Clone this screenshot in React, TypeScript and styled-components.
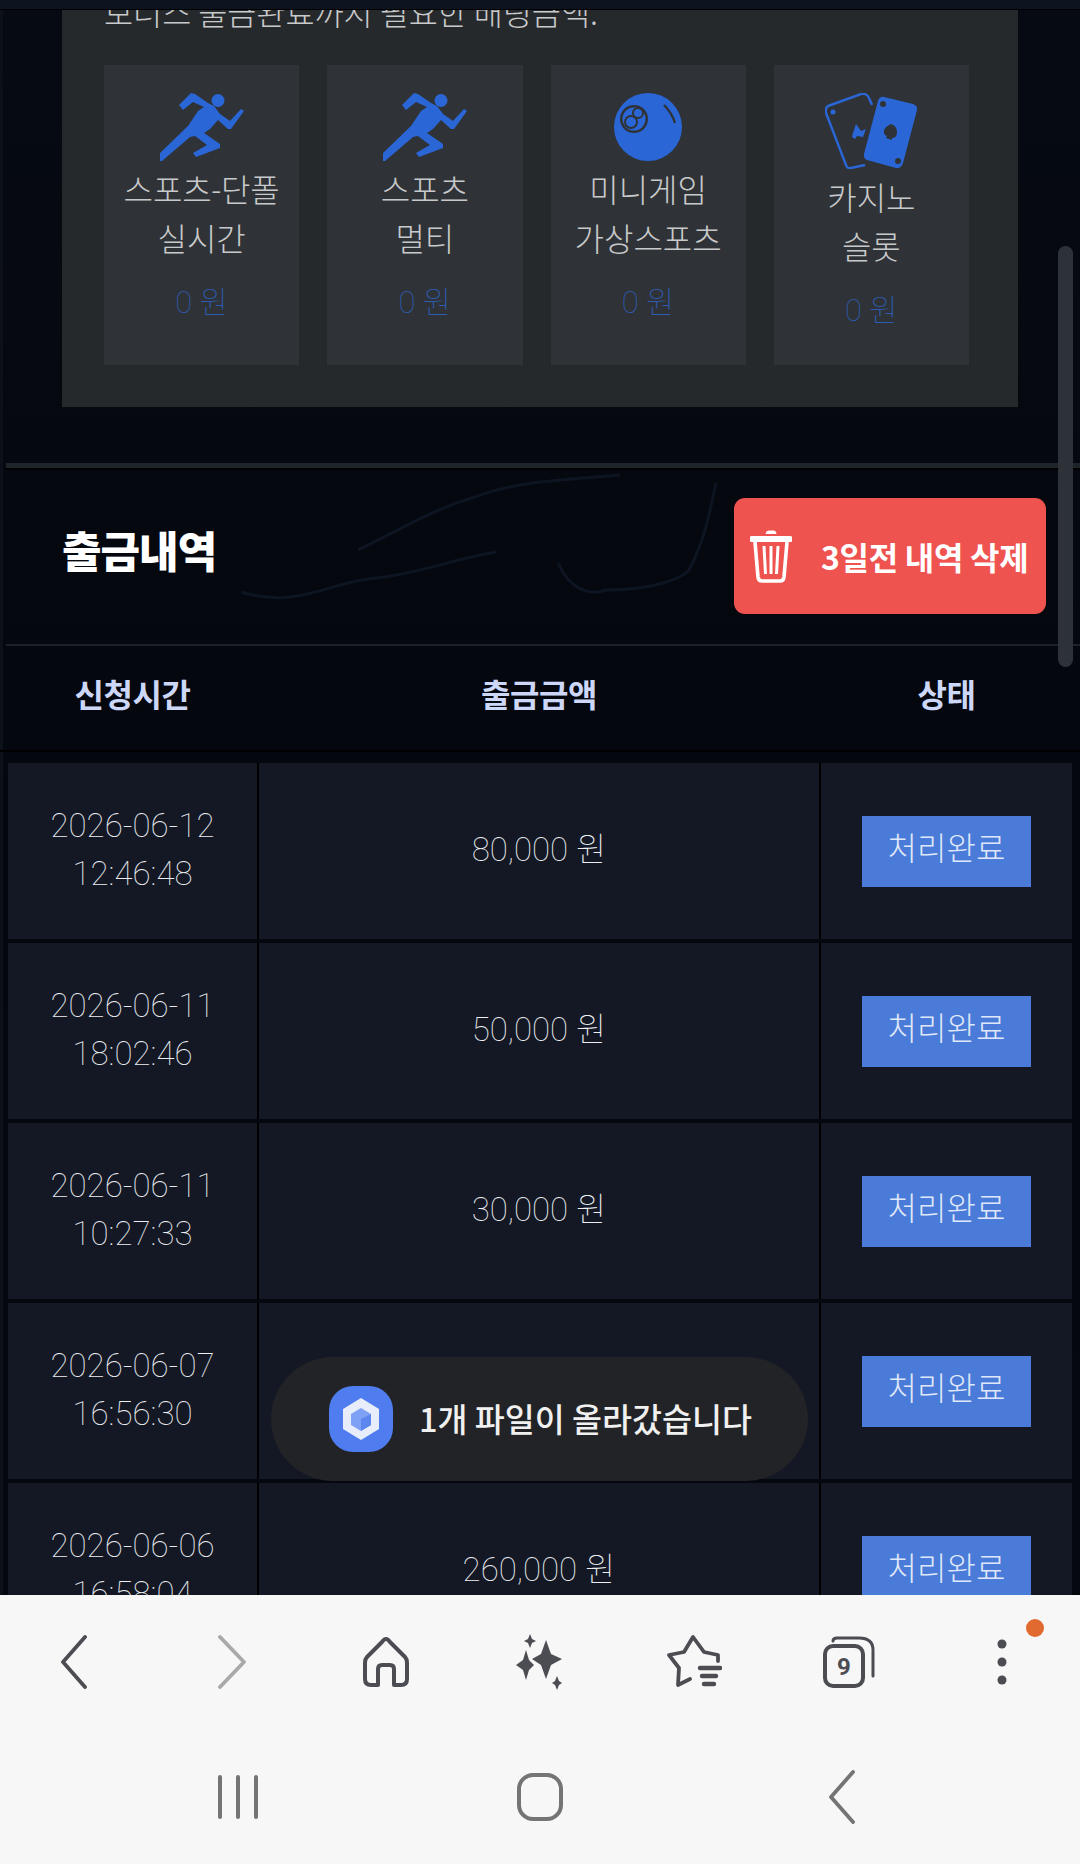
import React from 'react';
import styled, { createGlobalStyle } from 'styled-components';

const GlobalStyle = createGlobalStyle`
    html, body {
        margin: 0;
        padding: 0;
        background: #05080e;
    }
    * {
        box-sizing: border-box;
    }
`;

const FONT = `"Noto Sans CJK KR", "Noto Sans", sans-serif`;
const THIN = `Roboto, "Noto Sans CJK KR", sans-serif`;

const bonusCards = [
    { icon: 'run', lines: ['스포츠-단폴', '실시간'] },
    { icon: 'run', lines: ['스포츠', '멀티'] },
    { icon: 'ball', lines: ['미니게임', '가상스포츠'] },
    { icon: 'cards', lines: ['카지노', '슬롯'] },
];

const withdrawals = [
    { date: '2026-06-12', time: '12:46:48', amount: '80,000 원' },
    { date: '2026-06-11', time: '18:02:46', amount: '50,000 원' },
    { date: '2026-06-11', time: '10:27:33', amount: '30,000 원' },
    { date: '2026-06-07', time: '16:56:30', amount: '' },
    { date: '2026-06-06', time: '16:58:04', amount: '260,000 원' },
];

const RunnerIcon = () => (
    <svg width="84" height="68" viewBox="0 0 84 68" fill="#2a66d6">
        <circle cx="58" cy="7.5" r="6.5" />
        <path d="M19 12 L31 0 L35 1 L48 10 L54 13 L60 21 L70 28 L81 16 L84 18 L71 36 L68 36 L58 27 L50 36 L44 40 L60 51 L60 55 L36 64 L33 60 L47 52 L35 43 L30 44 L2 68 L0 68 L0 60 L28 33 L38 18 L44 14 L33 9 L23 17 Z" />
    </svg>
);

const BallIcon = () => (
    <svg width="68" height="68" viewBox="0 0 68 68">
        <circle cx="34" cy="34" r="34" fill="#2a66d6" />
        <circle cx="20" cy="26" r="14" fill="#2f3337" />
        <circle cx="20" cy="26" r="11.5" fill="#2a66d6" />
        <circle cx="24" cy="20" r="5" fill="none" stroke="#2f3337" strokeWidth="2" />
        <circle cx="17" cy="29" r="6" fill="none" stroke="#2f3337" strokeWidth="2" />
        <path d="M50 12 Q58 20 61 30" fill="none" stroke="#2f3337" strokeWidth="2.4" />
    </svg>
);

const CardsIcon = () => (
    <svg width="93" height="76" viewBox="0 0 93 76">
        <path d="M3 13 L36 1 Q42 0 44 5 L47 12 M40 72 L26 75 Q22 76 21 72 L1 20 Q0 15 3 13" fill="none" stroke="#2a66d6" strokeWidth="2.4" strokeLinejoin="round" />
        <circle cx="8" cy="19" r="2.5" fill="#2a66d6" />
        <path d="M31 31 L36 38 L41 36 L38 44 L32 43 L30 46 L27 44 L28 40 Z" fill="#2a66d6" />
        <path d="M59 4 L88 11 Q93 13 92 17 L78 70 Q76 76 71 75 L42 67 Q38 65 39 61 L53 8 Q55 3 59 4 Z" fill="#2a66d6" />
        <circle cx="58" cy="11" r="3" fill="#2f3337" />
        <circle cx="73" cy="68" r="3" fill="#2f3337" />
        <path d="M66 31 Q72 33 72 39 Q72 45 67 45 L67 47 L61 45 L62 43 Q58 42 59 37 Q61 33 66 31 Z" fill="#2f3337" />
    </svg>
);

const TrashIcon = () => (
    <svg width="42" height="53" viewBox="0 0 42 53" fill="none" stroke="#fff">
        <path d="M16 4 Q16 1 19 1 L24 1 Q26 1 26 4" fill="#fff" strokeWidth="1" />
        <path d="M2 9 L40 9" strokeWidth="6" strokeLinecap="round" />
        <path d="M5 12 L8 47 Q8.5 51 12 51 L30 51 Q33.5 51 34 47 L37 12" strokeWidth="3.6" />
        <path d="M14 16 L15.5 44 M21 16 L21 44 M28 16 L26.5 44" strokeWidth="3" />
    </svg>
);

const FileIcon = () => (
    <svg width="64" height="66" viewBox="0 0 64 66">
        <rect width="64" height="66" rx="24" fill="#4f7df0" />
        <path d="M32 12 L50 23 L50 43 L32 54 L14 43 L14 23 Z" fill="#e8edfb" />
        <path d="M32 22 L42 28 L42 39 L32 45 L22 39 L22 28 Z" fill="#7fa1f5" />
        <path d="M32 33 L42 28 L42 39 L32 45 Z" fill="#5d86ee" />
    </svg>
);

const BackArrow = ({ color = '#4c4d52' }: { color?: string }) => (
    <svg width="26" height="54" viewBox="0 0 26 54" fill="none" stroke={color} strokeWidth="3.8" strokeLinecap="round" strokeLinejoin="round">
        <path d="M24 2 L2 27 L24 52" />
    </svg>
);

const ForwardArrow = () => (
    <svg width="28" height="54" viewBox="0 0 28 54" fill="none" stroke="#a9a9ab" strokeWidth="3.8" strokeLinecap="round" strokeLinejoin="round">
        <path d="M2 2 L26 27 L2 52" />
    </svg>
);

const HomeIcon = () => (
    <svg width="46" height="50" viewBox="0 0 46 50" fill="none" stroke="#4c4d52" strokeWidth="4" strokeLinejoin="round">
        <path d="M23 2 Q21 2 19 5 L4 20 Q2 22 2 26 L2 42 Q2 48 8 48 L15 48 L15 32 Q15 28 19 28 L27 28 Q31 28 31 32 L31 48 L38 48 Q44 48 44 42 L44 26 Q44 22 42 20 L27 5 Q25 2 23 2 Z" />
    </svg>
);

const SparkleIcon = () => (
    <svg width="48" height="56" viewBox="0 0 48 56" fill="#4c4d52">
        <path d="M30 6 L35 20 L46 25 L35 31 L30 45 L25 31 L16 25 L25 20 Z" />
        <path d="M10 16 L13 26 L18 31 L13 36 L10 46 L7 36 L0 31 L7 26 Z" />
        <path d="M14 0 L16 5 L20 7 L16 9 L14 14 L12 9 L8 7 L12 5 Z" />
        <path d="M41 42 L43 47 L46 49 L43 51 L41 56 L39 51 L36 49 L39 47 Z" />
    </svg>
);

const StarIcon = () => (
    <svg width="56" height="54" viewBox="0 0 56 54" fill="none" stroke="#4c4d52" strokeWidth="3.8" strokeLinecap="round" strokeLinejoin="round">
        <path d="M52 26 L52 20 L38 17 L27 2 L18 17 L3 20 L13 33 L12 50 L24 44" />
        <path d="M34 33 L54 33 M36 41 L50 41 M38 49 L48 49" strokeWidth="4.4" />
    </svg>
);

const TabsIcon = () => (
    <svg width="52" height="52" viewBox="0 0 52 52" fill="none" stroke="#4c4d52" strokeLinecap="round">
        <rect x="2" y="10" width="38" height="40" rx="8" strokeWidth="4" />
        <path d="M10 5 Q10 2 14 2 L36 2 Q50 2 50 14 L50 40" strokeWidth="3" />
        <text x="21" y="39" textAnchor="middle" fontSize="24" fontWeight="700" fontFamily="Roboto, sans-serif" fill="#4c4d52" stroke="none">9</text>
    </svg>
);

const MoreIcon = () => (
    <svg width="10" height="46" viewBox="0 0 10 46" fill="#4c4d52">
        <circle cx="5" cy="5" r="4.5" />
        <circle cx="5" cy="23" r="4.5" />
        <circle cx="5" cy="41" r="4.5" />
    </svg>
);

const SmokeLines = () => (
    <Smoke viewBox="0 0 1080 760" fill="none" stroke="#0e1522" strokeWidth="3">
        <path d="M241 592 C300 610 330 580 385 577 C430 570 450 560 496 552" />
        <path d="M358 550 C400 530 430 510 475 497 C520 480 570 480 620 475" />
        <path d="M558 563 C570 590 590 596 606 590 C650 590 680 580 689 570 C705 540 710 510 716 483" />
    </Smoke>
);

const App: React.FC = () => {
    const renderIcon = (icon: string) => {
        if (icon === 'run') return <RunnerIcon />;
        if (icon === 'ball') return <BallIcon />;
        return <CardsIcon />;
    };

    return (
        <Page>
            <GlobalStyle />
            <SmokeLines />
            <TopEdge />
            <Viewport>
                <BonusArea>
                    <BonusPanel>
                        <BonusNote>보너스 출금완료까지 필요한 배팅금액.</BonusNote>
                        <CardGrid>
                            {bonusCards.map((card, index) => (
                                <BonusCard key={index}>
                                    <IconSlot>{renderIcon(card.icon)}</IconSlot>
                                    <CardLabel>{card.lines[0]}</CardLabel>
                                    <CardLabel>{card.lines[1]}</CardLabel>
                                    <CardAmount>0 원</CardAmount>
                                </BonusCard>
                            ))}
                        </CardGrid>
                    </BonusPanel>
                </BonusArea>
                <Divider />
                <SectionHeader>
                    <SectionTitle>출금내역</SectionTitle>
                    <DeleteButton>
                        <TrashIcon />
                        3일전 내역 삭제
                    </DeleteButton>
                </SectionHeader>
                <TableHead>
                    <HeadCell>신청시간</HeadCell>
                    <HeadCell>출금금액</HeadCell>
                    <HeadCell>상태</HeadCell>
                </TableHead>
                <TableBody>
                    {withdrawals.map((row, index) => (
                        <TableRow key={index}>
                            <BodyCell>
                                <span>{row.date}</span>
                                <span>{row.time}</span>
                            </BodyCell>
                            <BodyCell>{row.amount}</BodyCell>
                            <BodyCell>
                                <StatusBadge>처리완료</StatusBadge>
                            </BodyCell>
                        </TableRow>
                    ))}
                </TableBody>
            </Viewport>
            <BrowserBar>
                <ToolButton $nudge={-6}><BackArrow /></ToolButton>
                <ToolButton $nudge={2}><ForwardArrow /></ToolButton>
                <ToolButton><HomeIcon /></ToolButton>
                <ToolButton><SparkleIcon /></ToolButton>
                <ToolButton><StarIcon /></ToolButton>
                <ToolButton><TabsIcon /></ToolButton>
                <ToolButton $nudge={-2}>
                    <MoreIcon />
                    <NoticeDot />
                </ToolButton>
            </BrowserBar>
            <SystemNav>
                <NavButton>
                    <svg width="42" height="44" viewBox="0 0 42 44" stroke="#747476" strokeWidth="4" strokeLinecap="round">
                        <path d="M3 2 L3 42 M21 2 L21 42 M39 2 L39 42" />
                    </svg>
                </NavButton>
                <NavButton>
                    <svg width="46" height="48" viewBox="0 0 46 48" fill="none" stroke="#747476" strokeWidth="4">
                        <rect x="2" y="2" width="42" height="44" rx="14" />
                    </svg>
                </NavButton>
                <NavButton>
                    <BackArrow color="#747476" />
                </NavButton>
            </SystemNav>
            <ScrollThumb />
            <Toast>
                <FileIcon />
                <ToastText>1개 파일이 올라갔습니다</ToastText>
            </Toast>
        </Page>
    );
};

const Page = styled.div`
    position: relative;
    width: 1080px;
    height: 1864px;
    overflow: hidden;
    display: flex;
    flex-direction: column;
    background:
        linear-gradient(90deg, #0b1019 3px, transparent 3px),
        linear-gradient(180deg, #060a12 0%, #04070d 45%, #05080f 100%);
    font-family: ${FONT};
`;

const Smoke = styled.svg`
    position: absolute;
    left: 0;
    top: 0;
    width: 1080px;
    height: 760px;
`;

const TopEdge = styled.div`
    position: relative;
    flex: none;
    height: 10px;
    background: #0d1420;
    border-bottom: 1px solid #000;
`;

const Viewport = styled.div`
    position: relative;
    flex: none;
    height: 1585px;
    overflow: hidden;
`;

const BonusArea = styled.div`
    height: 453px;
    padding: 0 62px;
`;

const BonusPanel = styled.div`
    height: 397px;
    padding: 0 49px 0 42px;
    overflow: hidden;
    background: #26292c;
`;

const BonusNote = styled.div`
    height: 40px;
    margin-top: -19px;
    margin-bottom: 34px;
    font-family: ${FONT};
    font-size: 31.6px;
    font-weight: 300;
    line-height: 40px;
    color: #c9cacb;
    white-space: nowrap;
`;

const CardGrid = styled.div`
    display: grid;
    grid-template-columns: repeat(4, 1fr);
    column-gap: 28px;
`;

const BonusCard = styled.div`
    height: 300px;
    padding-top: 28px;
    background: #2f3337;
    text-align: center;
`;

const IconSlot = styled.div`
    display: flex;
    justify-content: center;
    margin-bottom: 6px;
    svg {
        display: block;
    }
`;

const CardLabel = styled.div`
    font-family: ${THIN};
    font-size: 32px;
    font-weight: 300;
    line-height: 49px;
    color: #c8c9ca;
`;

const CardAmount = styled.div`
    margin-top: 14px;
    font-family: ${THIN};
    font-size: 31px;
    font-weight: 100;
    line-height: 48px;
    color: #2d5cb4;
`;

const Divider = styled.div`
    height: 7px;
    margin-left: 6px;
    background: #1e2429;
    border-bottom: 2px solid #000;
`;

const SectionHeader = styled.div`
    height: 176px;
    margin-left: 6px;
    padding: 0 34px 0 56px;
    display: flex;
    align-items: center;
    justify-content: space-between;
    position: relative;
    border-bottom: 2px solid #1b2029;
`;

const SectionTitle = styled.h2`
    margin: -16px 0 0;
    font-size: 43px;
    font-weight: 900;
    color: #fff;
    letter-spacing: -1px;
`;

const DeleteButton = styled.button`
    width: 312px;
    height: 116px;
    margin-top: -2px;
    padding: 0 0 0 16px;
    display: flex;
    align-items: center;
    gap: 29px;
    border: 0;
    border-radius: 11px;
    background: #ef5350;
    font-family: ${FONT};
    font-size: 32px;
    font-weight: 700;
    letter-spacing: -0.3px;
    color: #fff;
    white-space: nowrap;
`;

const TableHead = styled.div`
    height: 106px;
    display: grid;
    grid-template-columns: 249px 560px 251px;
    column-gap: 2px;
    align-items: center;
    padding-left: 8px;
    border-bottom: 2px solid #000;
    position: relative;
`;

const HeadCell = styled.div`
    margin-top: -10px;
    text-align: center;
    font-size: 32px;
    font-weight: 700;
    color: #cdd8f8;
    letter-spacing: -0.5px;
`;

const TableBody = styled.div`
    position: relative;
    padding: 11px 8px 0;
    display: flex;
    flex-direction: column;
    gap: 4px;
`;

const TableRow = styled.div`
    flex: none;
    height: 176px;
    display: grid;
    grid-template-columns: 249px 560px 251px;
    column-gap: 2px;
    background: #000;
`;

const BodyCell = styled.div`
    display: flex;
    flex-direction: column;
    align-items: center;
    justify-content: center;
    padding-bottom: 3px;
    background: #131824;
    font-family: ${THIN};
    font-size: 33px;
    font-weight: 100;
    line-height: 48px;
    color: #eceef2;
`;

const StatusBadge = styled.div`
    width: 169px;
    height: 71px;
    margin-top: 3px;
    display: flex;
    align-items: center;
    justify-content: center;
    padding-bottom: 4px;
    background: #4a7bd8;
    font-size: 32px;
    font-weight: 300;
    color: #dfe7f8;
`;

const BrowserBar = styled.div`
    position: relative;
    flex: none;
    height: 134px;
    width: 1080px;
    display: grid;
    grid-template-columns: repeat(7, 1fr);
    background: #f7f7f7;
`;

const ToolButton = styled.div<{ $nudge?: number }>`
    position: relative;
    display: flex;
    align-items: center;
    justify-content: center;
    padding-left: ${(p) => Math.max(p.$nudge || 0, 0)}px;
    padding-right: ${(p) => Math.max(-(p.$nudge || 0), 0)}px;
`;

const NoticeDot = styled.span`
    position: absolute;
    left: 100px;
    top: 24px;
    width: 18px;
    height: 18px;
    border-radius: 50%;
    background: #e06a30;
`;

const SystemNav = styled.div`
    position: relative;
    flex: none;
    height: 135px;
    width: 1080px;
    display: grid;
    grid-template-columns: repeat(3, 302px);
    justify-content: center;
    background: #f7f7f7;
`;

const NavButton = styled.div`
    display: flex;
    align-items: center;
    justify-content: center;
    svg {
        display: block;
    }
`;

const ScrollThumb = styled.div`
    position: absolute;
    left: 1058px;
    top: 246px;
    width: 15px;
    height: 421px;
    border-radius: 8px;
    background: #2d3138;
`;

const Toast = styled.div`
    position: absolute;
    left: 271px;
    top: 1357px;
    width: 537px;
    height: 124px;
    padding-left: 58px;
    display: flex;
    align-items: center;
    gap: 26px;
    border-radius: 62px;
    background: #222326;
`;

const ToastText = styled.div`
    font-family: ${FONT};
    font-size: 32.6px;
    font-weight: 500;
    color: #f0f0f0;
    white-space: nowrap;
    margin-top: -4px;
`;

export default App;
